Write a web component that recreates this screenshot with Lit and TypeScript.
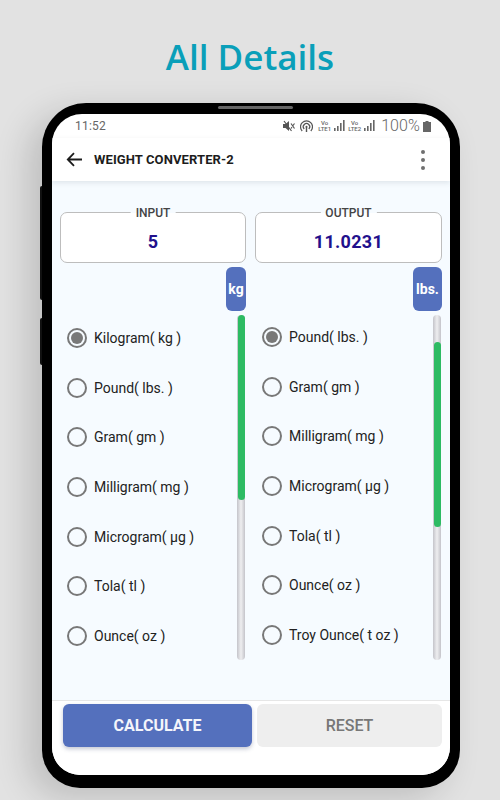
import { LitElement, html, css, svg } from "lit";
import { customElement } from "lit/decorators.js";

const LEFT = ["Kilogram( kg )", "Pound( lbs. )", "Gram( gm )", "Milligram( mg )", "Microgram( µg )", "Tola( tl )", "Ounce( oz )"];
const RIGHT = ["Pound( lbs. )", "Gram( gm )", "Milligram( mg )", "Microgram( µg )", "Tola( tl )", "Ounce( oz )", "Troy Ounce( t oz )"];

const signal = svg`<svg class="sig" width="11" height="12" viewBox="0 0 11 12"><g fill="#666"><rect x="0" y="8" width="1.6" height="3"/><rect x="3" y="6" width="1.6" height="5"/><rect x="6" y="3" width="1.6" height="8"/><rect x="9" y="0" width="1.6" height="11"/></g></svg>`;

@customElement("app-root")
export class AppRoot extends LitElement {
  static styles = css`
    :host { display: block; width: 500px; height: 800px; overflow: hidden; background: #e2e2e2; font-family: Roboto, "Liberation Sans", sans-serif; }
    .page { display: flex; flex-direction: column; align-items: flex-start; height: 800px; box-sizing: border-box; }
    h1 { width: 100%; margin: 0; height: 103px; box-sizing: border-box; padding-top: 35px; text-align: center; font: 600 35px/44px "Open Sans", sans-serif; color: #0a9fb9; }
    .phone { position: relative; margin-left: 42px; width: 418px; height: 685px; box-sizing: border-box; padding: 11px 10px 13px; background: #000; border-radius: 44px 44px 38px 38px; box-shadow: -14px 10px 34px rgba(0,0,0,.16); }
    .speaker { position: absolute; left: 176px; top: 3px; width: 75px; height: 3px; border-radius: 2px; background: #666; }
    .side { position: absolute; left: -2px; width: 2px; background: #111; border-radius: 2px 0 0 2px; }
    .s1 { top: 83px; height: 114px; }
    .s2 { top: 215px; height: 47px; }
    .screen { width: 398px; height: 661px; background: #fff; border-radius: 30px 30px 28px 28px; overflow: hidden; display: flex; flex-direction: column; }
    .status { height: 24px; flex: none; display: flex; align-items: center; padding: 0 19px 0 23px; color: #666; }
    .time { font-size: 12px; letter-spacing: .2px; margin-right: auto; }
    .icons { display: flex; align-items: center; }
    .ico { margin-right: 5px; }
    .lte { display: flex; flex-direction: column; font-size: 6px; line-height: 6px; font-weight: 500; width: 13px; text-align: center; margin-right: 3px; }
    .sig { margin-right: 3px; }
    .pct { font-size: 16px; line-height: 18px; margin: 0 3px 0 3px; font-weight: 300; letter-spacing: .1px; }
    .bar { height: 43px; flex: none; display: flex; align-items: center; padding: 0 25px 0 14px; background: #fff; box-shadow: 0 2px 5px rgba(60,70,90,.12); position: relative; }
    .bar-title { margin-left: 11px; font-size: 13px; font-weight: 700; color: #1c1c1c; letter-spacing: .1px; margin-right: auto; }
    .dots { display: flex; flex-direction: column; gap: 4px; }
    .dots i { width: 4px; height: 4px; border-radius: 50%; background: #6f6f6f; }
    .content { flex: 1; min-height: 0; background: #f6fbff; display: grid; grid-template-columns: 186px 187px; column-gap: 9px; padding: 31px 8px 0; align-content: start; }
    .col { display: flex; flex-direction: column; min-width: 0; }
    .box { position: relative; height: 51px; box-sizing: border-box; background: #fff; border: 1px solid #bdbdbd; border-radius: 7px; display: flex; justify-content: center; align-items: center; padding-top: 7px; font-size: 18px; font-weight: 700; color: #22108c; letter-spacing: .3px; }
    .label { position: absolute; top: -7px; left: 50%; transform: translateX(-50%); padding: 0 5px; font-size: 12px; line-height: 14px; font-weight: 500; color: #444; background: linear-gradient(#f6fbff 50%, #fff 50%); letter-spacing: 0; }
    .badge { align-self: flex-end; margin-top: 4px; height: 44px; box-sizing: border-box; border-radius: 6px; background: #5470bd; color: #fff; font-size: 14px; font-weight: 700; display: flex; align-items: center; justify-content: center; }
    .kg { width: 20px; }
    .lb { width: 29px; }
    .body { display: flex; justify-content: space-between; }
    .list { padding: 2px 0 0 7px; }
    .right .list { padding-top: 1px; }
    .row { height: 49.7px; display: flex; align-items: center; gap: 7px; font-size: 14px; color: #222; white-space: nowrap; }
    .radio { width: 20px; height: 20px; box-sizing: border-box; border: 2px solid #787878; border-radius: 50%; display: flex; align-items: center; justify-content: center; }
    .radio.on::after { content: ""; width: 12px; height: 12px; border-radius: 50%; background: #787878; }
    .track { width: 8px; height: 345px; margin-top: 4px; border-radius: 4px; background: linear-gradient(90deg, #c4c4ca, #eeeef0 50%, #c4c4ca); flex: none; }
    .left .track { margin-right: 1px; }
    .right .track { margin-right: 1px; }
    .thumb { width: 7px; margin: 0 auto; height: 185px; border-radius: 4px; background: #2dbb63; }
    .footer { flex: none; height: 75px; box-sizing: border-box; background: #fff; border-top: 1px solid #e6e6e6; padding: 3px 8px 0 11px; display: flex; align-items: flex-start; gap: 5px; }
    .btn { height: 43px; border: 0; border-radius: 6px; font: 700 16px Roboto, sans-serif; letter-spacing: 0; display: flex; align-items: center; justify-content: center; padding: 0; }
    .calc { width: 189px; background: #5470bd; color: #f4f6fb; box-shadow: 0 2px 4px rgba(60,70,110,.3); }
    .reset { width: 185px; background: #eeeeee; color: #777; font-weight: 500; }
  `;

  private column(side: string, title: string, value: string, unit: string, unitCls: string, items: string[], thumbTop: number) {
    return html`<div class="col ${side}">
      <div class="box"><span class="label">${title}</span>${value}</div>
      <div class="badge ${unitCls}">${unit}</div>
      <div class="body">
        <div class="list">
          ${items.map((t, i) => html`<div class="row"><span class="radio ${i === 0 ? "on" : ""}"></span>${t}</div>`)}
        </div>
        <div class="track"><div class="thumb" style="transform: translateY(${thumbTop}px)"></div></div>
      </div>
    </div>`;
  }

  render() {
    return html`<div class="page">
      <h1>All Details</h1>
      <div class="phone">
        <div class="speaker"></div>
        <div class="side s1"></div>
        <div class="side s2"></div>
        <div class="screen">
          <div class="status">
            <span class="time">11:52</span>
            <div class="icons">
              <svg class="ico" width="12" height="12" viewBox="0 0 12 12"><path fill="#555" d="M0 4h2.5L6 1v10L2.5 8H0z"/><path stroke="#555" stroke-width="1.2" d="M1 1l7.5 10M8 3.5l3.5 5M11.5 3.5l-1.5 2M8 8.5l1-1.3" fill="none"/></svg>
              <svg class="ico" width="13" height="13" viewBox="0 0 13 13" fill="none" stroke="#555" stroke-width="1.2"><path d="M2.2 11a6 6 0 1 1 8.6 0"/><path d="M4.2 9a3.2 3.2 0 1 1 4.6 0"/><circle cx="6.5" cy="6.8" r="1" fill="#555" stroke="none"/><path d="M6.5 7v5" stroke-width="1.4"/></svg>
              <span class="lte"><span>Vo</span><span>LTE1</span></span>${signal}
              <span class="lte"><span>Vo</span><span>LTE2</span></span>${signal}
              <span class="pct">100%</span>
              <svg width="8" height="11" viewBox="0 0 8 11"><path fill="#666" d="M2.5 0h3v1H8v10H0V1h2.5z"/></svg>
            </div>
          </div>
          <div class="bar">
            <svg width="17" height="15" viewBox="0 0 17 15" fill="none" stroke="#1c1c1c" stroke-width="1.8"><path d="M16 7.5H2M8 1.2L1.8 7.5 8 13.8"/></svg>
            <span class="bar-title">WEIGHT CONVERTER-2</span>
            <div class="dots"><i></i><i></i><i></i></div>
          </div>
          <div class="content">
            ${this.column("left", "INPUT", "5", "kg", "kg", LEFT, 0)}
            ${this.column("right", "OUTPUT", "11.0231", "lbs.", "lb", RIGHT, 27)}
          </div>
          <div class="footer">
            <div class="btn calc">CALCULATE</div>
            <div class="btn reset">RESET</div>
          </div>
        </div>
      </div>
    </div>`;
  }
}
